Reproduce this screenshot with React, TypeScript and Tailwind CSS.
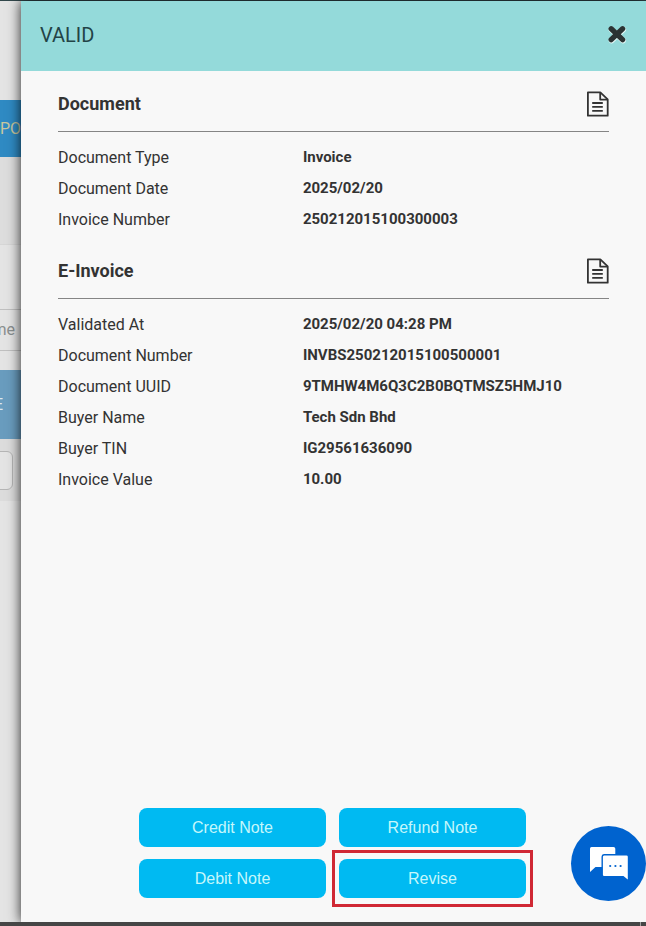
import type { ReactNode } from "react";

type Row = { label: string; value: string };

const documentRows: Row[] = [
  { label: "Document Type", value: "Invoice" },
  { label: "Document Date", value: "2025/02/20" },
  { label: "Invoice Number", value: "250212015100300003" },
];

const eInvoiceRows: Row[] = [
  { label: "Validated At", value: "2025/02/20 04:28 PM" },
  { label: "Document Number", value: "INVBS250212015100500001" },
  { label: "Document UUID", value: "9TMHW4M6Q3C2B0BQTMSZ5HMJ10" },
  { label: "Buyer Name", value: "Tech Sdn Bhd" },
  { label: "Buyer TIN", value: "IG29561636090" },
  { label: "Invoice Value", value: "10.00" },
];

function DocumentIcon() {
  return (
    <svg width="23" height="26" viewBox="0 0 23 26" fill="none" stroke="#333333" strokeWidth="1.8" aria-hidden="true">
      <path d="M1.9 1.4h12.4l7.400 7v16.300H1.900z" strokeLinejoin="round" />
      <path d="M14.200 1.400v7.200h7.500" strokeLinejoin="round" />
      <path d="M6.200 12h10.600M6.200 15.900h10.600M6.200 19.800h10.600" />
    </svg>
  );
}

function CloseIcon() {
  return (
    <svg width="20" height="20" viewBox="0 0 20 20" fill="none" strokeLinecap="round" aria-hidden="true">
      <path d="M4.600 4.600l11.400 10.800M16 4.600L4.600 15.400" stroke="#e6faf8" strokeWidth="6" />
      <path d="M4.200 3.800l11.400 10.800M15.600 3.800L4.200 14.600" stroke="#2b3333" strokeWidth="5.400" />
    </svg>
  );
}

function ChatIcon() {
  return (
    <svg width="40" height="36" viewBox="0 0 40 36" aria-hidden="true">
      <path d="M2.500 1h22A1.800 1.800 0 0 1 26.300 2.800V21H6.500L1 26V2.800A1.800 1.800 0 0 1 2.500 1z" fill="#fff" />
      <path
        d="M15 8.700h22.500A2 2 0 0 1 39.500 10.700V35l-5.300-4.300H15.200A2 2 0 0 1 13.200 28.700V10.700A2 2 0 0 1 15 8.700z"
        fill="#fff"
        stroke="#0063cf"
        strokeWidth="1.400"
      />
      <g fill="#0063cf">
        <circle cx="21.200" cy="20" r="1.100" />
        <circle cx="26.400" cy="20" r="1.100" />
        <circle cx="31.600" cy="20" r="1.100" />
      </g>
    </svg>
  );
}

function Section({ title, rows }: { title: string; rows: Row[] }) {
  return (
    <section>
      <div className="flex items-center justify-between border-b border-[#858585] pb-3.5">
        <h2 className="text-lg leading-6 font-bold">{title}</h2>
        <button type="button" aria-label={`Open ${title}`}>
          <DocumentIcon />
        </button>
      </div>
      <dl className="mt-2.5">
        {rows.map((row) => (
          <div key={row.label} className="grid h-[31px] grid-cols-[4fr_5fr] items-center">
            <dt className="text-base">{row.label}</dt>
            <dd className="text-[15px] font-bold">{row.value}</dd>
          </div>
        ))}
      </dl>
    </section>
  );
}

function ActionButton({ children }: { children: ReactNode }) {
  return (
    <button
      type="button"
      className="h-[39px] w-full rounded-lg bg-[#00baf2] font-['Liberation_Sans',sans-serif] text-base text-[#c5f7fb]"
    >
      {children}
    </button>
  );
}

// the bit of the listing page that stays visible beside the drawer
function PageBehind() {
  return (
    <div className="flex w-[21px] shrink-0 flex-col overflow-hidden bg-[#e4e4e4] text-base">
      <div className="h-[99px]" />
      <div className="flex h-[57px] items-center bg-[#2f8ac3] text-[#c9c8a0]">PO</div>
      <div className="h-[88px] border-b border-[#d6d6d6] bg-[#dddddd]" />
      <div className="h-16" />
      <div className="flex h-[42px] items-center justify-end border-y border-[#c0c0c0] pr-1.5 text-[#8a8f8f]">
        me
      </div>
      <div className="h-[19px]" />
      <div className="flex h-[69px] items-center justify-end bg-[#699cbe] pr-[18px] text-[#dce8ef]">E</div>
      <div className="flex h-[62px] items-center justify-end bg-[#dcdcdc] pr-2">
        <input
          aria-label="Filter"
          className="h-[39px] w-32 shrink-0 rounded-md border border-[#b5b5b5] bg-[#e4e4e4]"
        />
      </div>
    </div>
  );
}

export default function App() {
  return (
    <div className="relative flex min-h-screen flex-col border-t border-[#31474b] font-[Roboto,sans-serif] text-[#333333]">
      <div className="flex flex-1">
        <PageBehind />

        <main className="relative flex min-w-0 flex-1 flex-col bg-[#f8f8f8] shadow-[0_0_12px_rgba(0,0,0,0.85)]">
          <header className="flex h-[70px] items-center justify-between bg-[#94dada] pr-[19px] pb-0.5 pl-[19px]">
            <h1 className="text-xl text-[#234346]">VALID</h1>
            <button type="button" aria-label="Close">
              <CloseIcon />
            </button>
          </header>

          <div className="flex flex-1 flex-col gap-[23px] px-[37px] pt-5 pb-8">
            <Section title="Document" rows={documentRows} />
            <Section title="E-Invoice" rows={eInvoiceRows} />
          </div>

          <footer className="flex justify-center pr-0.5 pb-6">
            <div className="grid w-full max-w-[387px] grid-cols-2 gap-x-[13px] gap-y-3">
              <ActionButton>Credit Note</ActionButton>
              <ActionButton>Refund Note</ActionButton>
              <ActionButton>Debit Note</ActionButton>
              <div className="relative">
                <ActionButton>Revise</ActionButton>
                <span className="pointer-events-none absolute -inset-x-[7px] -inset-y-[9px] border-3 border-[#d02834]" />
              </div>
            </div>
          </footer>
        </main>
      </div>

      <div className="relative flex h-1 justify-end bg-[#464646] pr-[5px]">
        <span className="w-px bg-[#a0a0a0]" />
      </div>

      <button
        type="button"
        aria-label="Chat"
        className="absolute right-0 bottom-[25px] flex size-[75px] items-center justify-center rounded-full bg-[#0063cf]"
      >
        <ChatIcon />
      </button>
    </div>
  );
}
